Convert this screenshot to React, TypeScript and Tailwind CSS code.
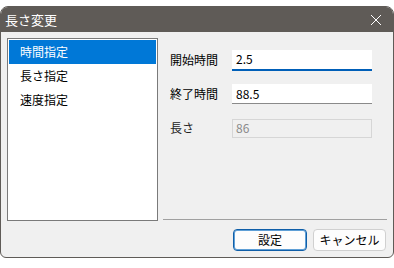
import { useState } from "react"

const modes = ["時間指定", "長さ指定", "速度指定"]

const font = { fontFamily: '"Noto Sans CJK JP", "Noto Sans", sans-serif' }

export default function App() {
  const [selected, setSelected] = useState(0)

  return (
    <div className="w-[394px] h-[268px] bg-white pt-[6px] text-[12px] text-black" style={font}>
      <div className="w-[394px] h-[252px] flex flex-col rounded-t-[8px] rounded-b-[6px] border border-[#5f5b57] bg-[#f0f0f0] overflow-hidden">
        {/* タイトルバー */}
        <div className="h-[25px] shrink-0 bg-[#5f5b57] flex items-center justify-between pl-[4px] pr-[10px]">
          <span className="text-white text-[13px] leading-none">長さ変更</span>
          <svg width="12" height="12" viewBox="0 0 12 12" className="mr-[1px]">
            <path d="M1 1 L11 11 M11 1 L1 11" stroke="#ffffff" strokeWidth="1" />
          </svg>
        </div>

        <div className="flex flex-col flex-1 pt-[6px] pl-[6px] pr-[6px]">
          <div className="flex">
            <ul className="w-[151px] h-[183px] bg-white border border-[#7a7a7a] p-[1px]">
              {modes.map((m, i) => (
                <li
                  key={m}
                  onClick={() => setSelected(i)}
                  className={
                    "h-[24px] flex items-center pl-[11px] " +
                    (i === selected ? "bg-[#0078d7] text-white" : "text-black")
                  }
                >
                  {m}
                </li>
              ))}
            </ul>

            <div className="ml-[5px] w-[224px] h-[182px] border-b border-[#a0a0a0] pt-[12px] pl-[7px] flex flex-col gap-[14px]">
              <div className="flex items-center h-[20px]">
                <span className="w-[62px]">開始時間</span>
                <div className="w-[140px] h-[21px] bg-white border-b-2 border-[#005fb8] flex items-center pl-[4px]">2.5</div>
              </div>
              <div className="flex items-center h-[20px]">
                <span className="w-[62px]">終了時間</span>
                <div className="w-[140px] h-[20px] bg-white border-b border-[#8a8a8a] flex items-center pl-[4px]">88.5</div>
              </div>
              <div className="flex items-center h-[20px]">
                <span className="w-[62px] text-[#222]">長さ</span>
                <div className="w-[140px] h-[19px] bg-[#f0f0f0] border border-[#d6d6d6] flex items-center pl-[3px] text-[#8a8a8a]">86</div>
              </div>
            </div>
          </div>

          <div className="flex justify-end gap-[6px] mt-[8px] pr-[1px]">
            <button className="w-[74px] h-[22px] rounded-[4px] border border-[#0f5ea8] bg-[#fdfdfd] shadow-[inset_0_0_0_1px_#5f9fd6] text-[12px] leading-none">
              設定
            </button>
            <button className="w-[73px] h-[22px] rounded-[4px] border border-[#d0d0d0] bg-[#fdfdfd] text-[12px] leading-none">
              キャンセル
            </button>
          </div>
        </div>
      </div>
    </div>
  )
}
